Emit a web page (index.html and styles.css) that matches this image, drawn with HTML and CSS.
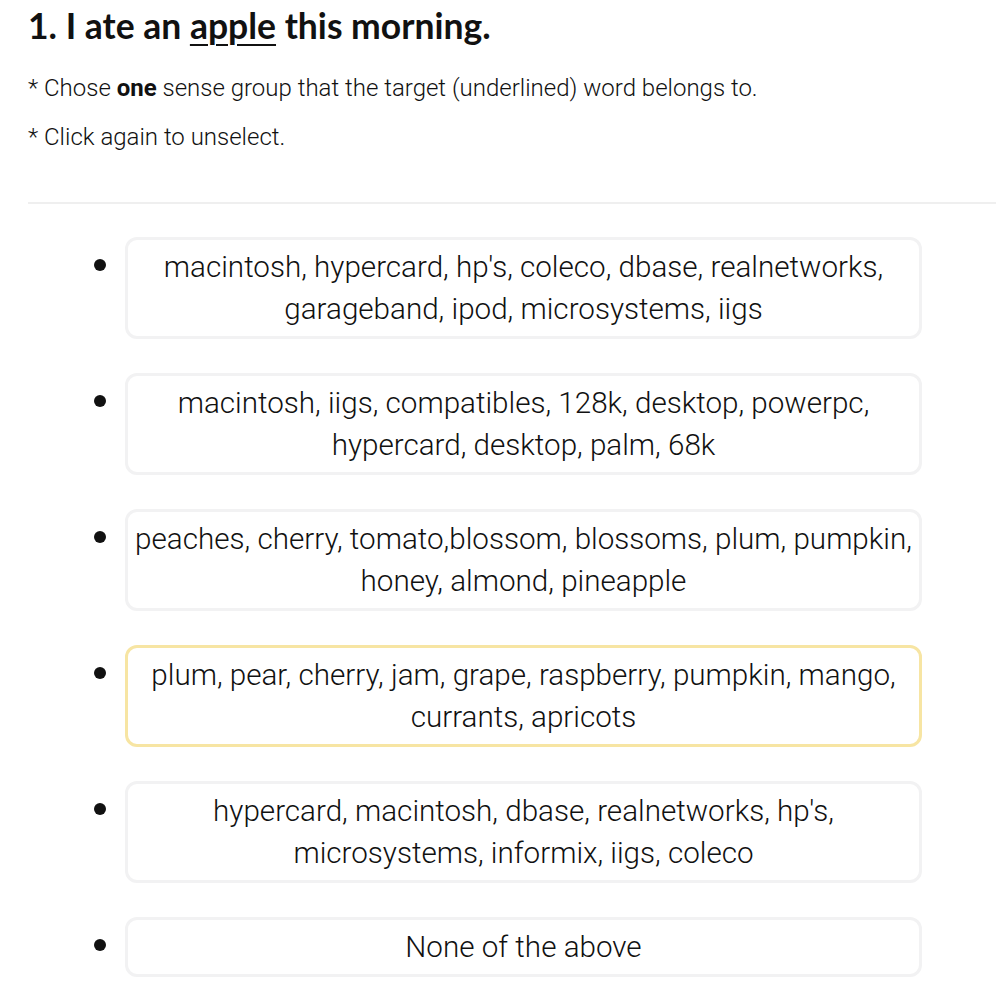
FILE: index.html
```html
<!DOCTYPE html>
<html>
<head>
<meta charset="utf-8">
<link rel="stylesheet" href="styles.css">
</head>
<body>
<h1 class="question">1. I ate an <u>apple</u> this morning.</h1>
<p class="note">* Chose <b>one</b> sense group that the target (underlined) word belongs to.</p>
<p class="note">* Click again to unselect.</p>
<hr class="rule">
<ul class="options">
  <li class="option"><div class="box">macintosh, hypercard, hp's, coleco, dbase, realnetworks, garageband, ipod, microsystems, iigs</div></li>
  <li class="option"><div class="box">macintosh, iigs, compatibles, 128k, desktop, powerpc, hypercard, desktop, palm, 68k</div></li>
  <li class="option"><div class="box">peaches, cherry, tomato,blossom, blossoms, plum, pumpkin, honey, almond, pineapple</div></li>
  <li class="option"><div class="box selected">plum, pear, cherry, jam, grape, raspberry, pumpkin, mango, currants, apricots</div></li>
  <li class="option"><div class="box">hypercard, macintosh, dbase, realnetworks, hp's, microsystems, informix, iigs, coleco</div></li>
  <li class="option"><div class="box">None of the above</div></li>
</ul>
</body>
</html>
```
FILE: styles.css
```css
html, body {
  margin: 0;
  padding: 0;
  background: #fff;
}
body {
  padding-left: 28px;
  color: #111;
  font-family: Roboto, "Liberation Sans", sans-serif;
}
.question {
  margin: 0;
  padding-top: 6px;
  font-family: Lato, "Liberation Sans", sans-serif;
  font-weight: 700;
  font-size: 35.5px;
  line-height: 40px;
  color: #111;
}
.question u {
  text-decoration-thickness: 2px;
  text-underline-offset: 5px;
}
.note {
  margin: 30px 0 0 0;
  font-size: 24px;
  line-height: 24px;
  font-weight: 300;
}
.note b {
  font-weight: 700;
}
.note + .note {
  margin-top: 25px;
}
.rule {
  border: 0;
  height: 2px;
  background: #efefef;
  margin: 53px 0 0 0;
}
.options {
  margin: 33px 0 0 0;
  padding: 0 0 0 97px;
  list-style: disc;
  font-weight: 300;
  font-size: 29.6px;
}
.option {
  margin-bottom: 34px;
}
.option::marker {
  font-size: 40px;
}
.box {
  box-sizing: border-box;
  width: 797px;
  border: 3px solid #f2f2f3;
  border-radius: 12px;
  padding: 6px 5px;
  text-align: center;
  line-height: 42px;
  color: #111;
}
.box.selected {
  border-color: #f7e5a3;
}
```
